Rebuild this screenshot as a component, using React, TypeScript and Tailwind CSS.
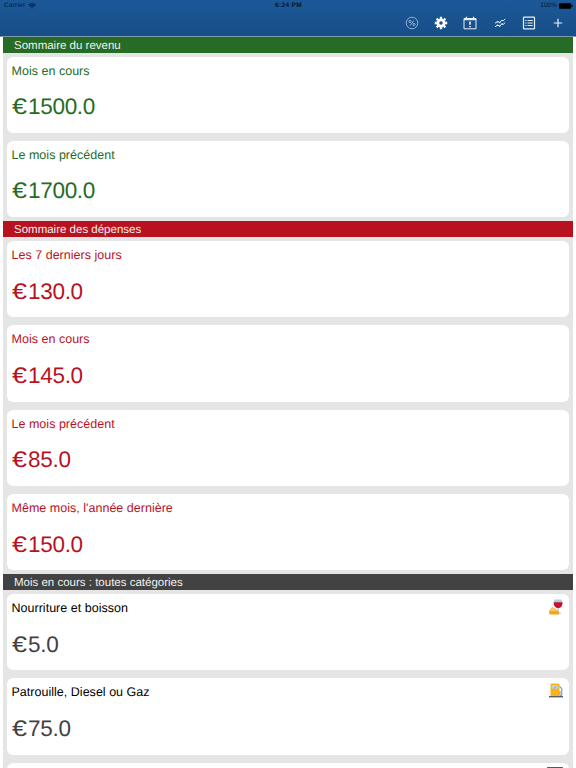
import type { ReactNode } from 'react'

interface Entry {
  label: string
  amount: string
  icon?: ReactNode
}

interface SectionProps {
  title: string
  bar: string
  labelColor: string
  amountColor: string
  entries: Entry[]
}

function WineIcon() {
  return (
    <svg viewBox="0 0 14 16" className="h-4 w-3.5">
      <path d="M5.200 .5h7.600l.3 3.200H5z" fill="#a9cdea" />
      <path d="M4.600 3.300h9c0 3.800-1.900 5.900-4.400 5.900s-4.600-2.100-4.600-5.900z" fill="#c8102e" />
      <path d="M8.600 8.800h1v4.600h2.200v1.300H7v-1.300h1.600z" fill="#a9bdd0" />
      <path d="M0 12.500 3.200 8l6.600 4.300v3.100H.6z" fill="#f5a21b" />
      <path d="M0 12.300 3.200 8l6.600 4.300z" fill="#fbc65a" />
    </svg>
  )
}

function FuelIcon() {
  return (
    <svg viewBox="0 0 14 15" className="h-[15px] w-3.5">
      <path d="M10 3 12.700 5.500v6.300c0 1.300-1.800 1.300-1.800 0V8" fill="none" stroke="#8ea3b8" strokeWidth="1.300" />
      <rect x="1.500" y=".5" width="9" height="13" rx="1.200" fill="#fbb216" />
      <rect x="2.700" y="2" width="6.500" height="3.800" rx=".5" fill="#a5dced" />
      <path d="m5 5.500 2-2" stroke="#d05a2a" strokeWidth=".7" />
      <rect x="0" y="13" width="14" height="1.400" fill="#56616d" />
    </svg>
  )
}

function CardIcon() {
  return (
    <svg viewBox="0 0 16 8" className="-mt-px h-2 w-4">
      <rect width="16" height="8" rx=".5" fill="#55565c" />
    </svg>
  )
}

const sections: SectionProps[] = [
  {
    title: 'Sommaire du revenu',
    bar: 'bg-[#266c26]',
    labelColor: 'text-[#266c26]',
    amountColor: 'text-[#266c26]',
    entries: [
      { label: 'Mois en cours', amount: '1500.0' },
      { label: 'Le mois précédent', amount: '1700.0' },
    ],
  },
  {
    title: 'Sommaire des dépenses',
    bar: 'bg-[#b8121f]',
    labelColor: 'text-[#b8121f]',
    amountColor: 'text-[#b8121f]',
    entries: [
      { label: 'Les 7 derniers jours', amount: '130.0' },
      { label: 'Mois en cours', amount: '145.0' },
      { label: 'Le mois précédent', amount: '85.0' },
      { label: "Même mois, l'année dernière", amount: '150.0' },
    ],
  },
  {
    title: 'Mois en cours : toutes catégories',
    bar: 'bg-[#424242]',
    labelColor: 'text-black',
    amountColor: 'text-[#424242]',
    entries: [
      { label: 'Nourriture et boisson', amount: '5.0', icon: <WineIcon /> },
      { label: 'Patrouille, Diesel ou Gaz', amount: '75.0', icon: <FuelIcon /> },
      { label: '', amount: '', icon: <CardIcon /> },
    ],
  },
]

function StatusBar() {
  return (
    <div className="flex h-3 items-center justify-between pl-1 pr-[3px] text-[6.500px] leading-3 text-[#06182c]">
      <div className="flex w-24 items-center gap-[3px]">
        <span className="tracking-[0.200px]">Carrier</span>
        <svg viewBox="0 0 8 6" className="h-[6px] w-2" fill="none" stroke="currentColor" strokeWidth="1.200">
          <path d="M.6 2.100a4.900 4.900 0 0 1 6.800 0M1.900 3.500a3 3 0 0 1 4.200 0" />
          <path d="m4 5.800-1-1.200a1.500 1.500 0 0 1 2 0z" fill="currentColor" stroke="none" />
        </svg>
      </div>
      <span className="font-bold tracking-[0.350px]">6:24 PM</span>
      <div className="flex w-24 items-center justify-end gap-[2px]">
        <span>100%</span>
        <svg viewBox="0 0 14 6" className="h-[6px] w-3.5" fill="#000">
          <rect x="0" y=".3" width="12.300" height="5.400" rx="1" />
          <rect x="12.800" y="2" width="1" height="2" rx=".5" />
        </svg>
      </div>
    </div>
  )
}

function Toolbar() {
  return (
    <div className="flex h-[22px] items-center justify-end gap-[15.200px] pr-[11px] text-[#e9f0f8]">
      <svg viewBox="0 0 14 14" className="h-3.5 w-3.5" fill="none" stroke="#a9c2dd" strokeWidth=".8">
        <circle cx="7" cy="7" r="5.800" />
        <path d="m5.200 9.600 3.600-5.200" />
        <circle cx="5" cy="5.500" r="1.100" />
        <circle cx="9" cy="8.500" r="1.100" />
      </svg>
      <svg viewBox="0 0 14 14" className="h-3.5 w-3.5" fill="none" stroke="#fff">
        <circle cx="7" cy="7" r="3.200" strokeWidth="2.800" />
        <path d="M7 .8v2M7 11.200v2M.8 7h2M11.200 7h2M2.600 2.600 4 4M10 10l1.400 1.400M11.400 2.600 10 4M4 10l-1.400 1.400" strokeWidth="2.300" />
      </svg>
      <svg viewBox="0 0 14 14" className="h-3.5 w-3.5" fill="none" stroke="currentColor">
        <path d="M1 2.500h12v10.300H1z" />
        <path d="M1 3.300h12" strokeWidth="1.800" />
        <path d="M3.500.8v2M10.500.8v2" strokeWidth="1.300" />
        <path d="M7 5.500v3.300M7 9.900v1.400" strokeWidth="1.600" />
      </svg>
      <svg viewBox="0 0 14 14" className="h-3.5 w-3.5" fill="none" stroke="currentColor" strokeWidth="1">
        <path d="m2 7.200 2.500-1.600 2.200.8 2.300-2.200 1.200.6L12.200 3M2 10.800l2.500-1.600 2.200.8L9 7.800l1.200.6 2-1.800" />
        <path d="M4.500 5.200v1.200M6.700 6v1.200M9 3.900v1.200M4.500 8.800V10M6.700 9.600v1.200M9 7.500v1.200" strokeWidth="1.300" />
      </svg>
      <svg viewBox="0 0 14 14" className="h-3.5 w-3.5" fill="none" stroke="currentColor">
        <rect x="1.500" y="1.200" width="11" height="11.600" rx=".6" strokeWidth="1.200" />
        <path d="M3.300 4.500h1.200M5.500 4.500h5.200M3.300 7h1.200M5.500 7h5.200M3.300 9.500h1.200M5.500 9.500h5.200" strokeWidth="1.100" />
      </svg>
      <svg viewBox="0 0 14 14" className="h-3.5 w-3.5" fill="none" stroke="currentColor" strokeWidth="1.200">
        <path d="M7 2.800v8.400M2.800 7h8.400" />
      </svg>
    </div>
  )
}

function Card({ entry, labelColor, amountColor }: { entry: Entry; labelColor: string; amountColor: string }) {
  return (
    <div className="flex h-[76.270px] justify-between rounded-md bg-white pl-[4.500px] pr-1.5">
      <div>
        <div className={`h-7 pt-1.5 text-[12.500px] leading-4 tracking-[0.020px] ${labelColor}`}>{entry.label}</div>
        {entry.amount && (
          <div className={`flex pt-[8.600px] text-[22.500px] leading-7 tracking-[-0.300px] ${amountColor}`}>
            <span className="w-[16.500px] origin-left scale-x-[1.200]">€</span>
            <span>{entry.amount}</span>
          </div>
        )}
      </div>
      {entry.icon && <div className="pt-[5px]">{entry.icon}</div>}
    </div>
  )
}

function Section({ title, bar, labelColor, amountColor, entries }: SectionProps) {
  return (
    <section>
      <h2 className={`h-4 pl-[11px] text-[11.500px] leading-[18px] text-[#f0f0f0] ${bar}`}>{title}</h2>
      <div className="px-1">
        {entries.map((entry, i) => (
          <div key={i} className="py-1">
            <Card entry={entry} labelColor={labelColor} amountColor={amountColor} />
          </div>
        ))}
      </div>
    </section>
  )
}

export default function App() {
  return (
    <div className="h-[768px] w-[576px] overflow-hidden bg-white font-['Liberation_Sans',sans-serif] [text-rendering:geometricPrecision]">
      <header className="h-[36.600px] border-b border-[#7e9aa9] bg-linear-to-b from-[#1c5898] to-[#174e88]">
        <StatusBar />
        <Toolbar />
      </header>
      <main className="mx-[3px] bg-[#e5e5e5]">
        {sections.map((section) => (
          <Section key={section.title} {...section} />
        ))}
      </main>
    </div>
  )
}
